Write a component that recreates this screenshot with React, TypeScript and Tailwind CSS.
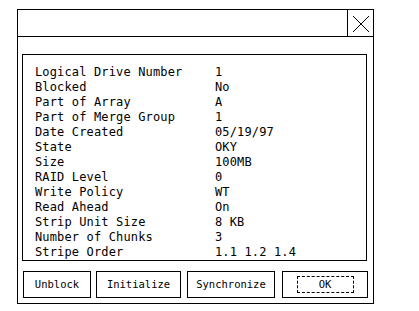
import React from "react";

const rows: [string, string][] = [
  ["Logical Drive Number", "1"],
  ["Blocked", "No"],
  ["Part of Array", "A"],
  ["Part of Merge Group", "1"],
  ["Date Created", "05/19/97"],
  ["State", "OKY"],
  ["Size", "100MB"],
  ["RAID Level", "0"],
  ["Write Policy", "WT"],
  ["Read Ahead", "On"],
  ["Strip Unit Size", "8 KB"],
  ["Number of Chunks", "3"],
  ["Stripe Order", "1.1 1.2 1.4"],
];

export default function App() {
  return (
    <div className="w-[419px] h-[311px] bg-white text-black overflow-hidden" style={{ fontFamily: '"DejaVu Sans Mono", monospace' }}>
      <div className="ml-[17px] mt-[9px] w-[357px] h-[295px] border border-black flex flex-col">
        <div className="h-[27px] border-b border-black flex justify-end">
          <div className="w-[26px] h-full border-l border-black flex items-center justify-center">
            <svg width="18" height="18" viewBox="0 0 18 18" className="mt-[1px]">
              <path d="M1 1 L17 17 M17 1 L1 17" stroke="black" strokeWidth="1" fill="none" />
            </svg>
          </div>
        </div>
        <div className="ml-[4px] mt-[17px] w-[345px] h-[207px] border border-black pl-[12px] pt-[10px] text-[12px] leading-[15px] tracking-[0.15px]">
          {rows.map(([k, v]) => (
            <div key={k} className="flex h-[15px]">
              <span className="w-[180px] whitespace-pre">{k}</span>
              <span className="whitespace-pre">{v}</span>
            </div>
          ))}
        </div>
        <div className="flex mt-[10px] ml-[5px] text-[10.5px]">
          <button className="w-[68px] h-[27px] border border-black flex items-center justify-center">Unblock</button>
          <button className="ml-[5px] w-[85px] h-[27px] border border-black flex items-center justify-center">Initialize</button>
          <button className="ml-[6px] w-[88px] h-[27px] border border-black flex items-center justify-center">Synchronize</button>
          <button className="ml-[7px] w-[86px] h-[27px] border border-black flex items-center justify-center">
            <span className="w-[57px] h-[17px] border border-dashed border-black flex items-center justify-center">OK</span>
          </button>
        </div>
      </div>
    </div>
  );
}
